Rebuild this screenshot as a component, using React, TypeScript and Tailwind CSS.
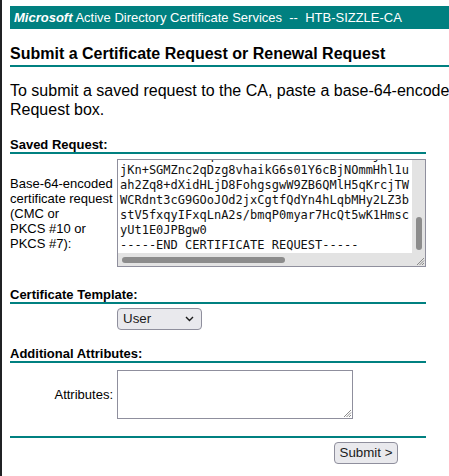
import React from 'react'

// Lines of the pasted request, as seen in the scrolled text box
const requestLines = [
  "X5rNc0aMTb8HqUt3kWn9sE2LvhR7odAx1eFjZmK4",
  "jKn+SGMZnc2qDzg8vhaikG6s01Y6cBjNOmmHhl1u",
  "ah2Zq8+dXidHLjD8FohgsgwW9ZB6QMlH5qKrcjTW",
  "WCRdnt3cG9GOoJOd2jxCgtfQdYn4hLqbMHy2LZ3b",
  "stV5fxqyIFxqLnA2s/bmqP0myar7HcQt5wK1Hmsc",
  "yUt1E0JPBgw0",
  "-----END CERTIFICATE REQUEST-----",
]

const SectionTitle = ({ children }: { children: React.ReactNode }) => (
  <div className="border-b-2 border-[#008080] text-[13px] font-bold leading-[15px]">{children}</div>
)

const Grip = () => (
  <svg width="11" height="11" viewBox="0 0 11 11" className="text-[#8a8a8a]">
    <path d="M10 3 L3 10 M10 5.5 L5.5 10 M10 8 L8 10" stroke="currentColor" strokeWidth="1" fill="none" />
  </svg>
)

const App = () => {
  return (
    <div className="flex min-h-screen bg-white font-['Liberation_Sans',Arial,sans-serif] text-black">
      <div className="w-[2px] shrink-0 bg-[#202124]" />
      <div className="flex-1 overflow-hidden pl-[8px] pt-[6px]">
        {/* banner */}
        <div className="flex h-[23px] w-[700px] items-center whitespace-pre bg-[#008080] pl-[4px] text-[13px] text-white">
          <span className="font-bold italic">Microsoft</span>
          <span> Active Directory Certificate Services{"\u00a0 --\u00a0 "}HTB-SIZZLE-CA</span>
        </div>

        <h2 className="mt-[16px] w-[700px] border-b-2 border-[#008080] pb-[2px] text-[16px] font-bold leading-[18px]">
          Submit a Certificate Request or Renewal Request
        </h2>

        <p className="mt-[14px] whitespace-nowrap text-[16px] leading-[19px]">
          To submit a saved request to the CA, paste a base-64-encoded CMC or PKCS #10 certificate request or PKCS #7 renewal request generated by an external source (such as a Web server) in the Saved
          <br />
          Request box.
        </p>

        <div className="w-[416px]">
          <div className="mt-[18px]">
            <SectionTitle>Saved Request:</SectionTitle>
          </div>

          <div className="mt-[5px] flex items-center gap-[4px]">
            <div className="w-[103px] text-[13px] leading-[15px]">
              Base-64-encoded certificate request (CMC or
              <br />
              PKCS #10 or
              <br />
              PKCS #7):
            </div>
            <div className="flex h-[108px] w-[309px] flex-col border border-[#8f8f9d] bg-white">
              <div className="flex min-h-0 flex-1">
                <div className="flex-1 overflow-hidden whitespace-pre pl-[2px] font-['DejaVu_Sans_Mono',monospace] text-[12px] leading-[15px] text-[#111]">
                  {requestLines.map((line, i) => (
                    <div key={i} className={i === 0 ? '-mt-[12px]' : ''}>{line}</div>
                  ))}
                </div>
                <div className="w-[13px] bg-[#e3e3e3] pt-[57px]">
                  <div className="mx-auto h-[33px] w-[6px] rounded-full bg-[#8c8c8c]" />
                </div>
              </div>
              <div className="flex h-[13px]">
                <div className="flex flex-1 items-center bg-[#e3e3e3] pl-[4px]">
                  <div className="h-[6px] w-[163px] rounded-full bg-[#8c8c8c]" />
                </div>
                <div className="flex w-[13px] items-end justify-end bg-[#e3e3e3]">
                  <Grip />
                </div>
              </div>
            </div>
          </div>

          <div className="mt-[20px]">
            <SectionTitle>Certificate Template:</SectionTitle>
          </div>
          <div className="mt-[4px] pl-[107px]">
            <div className="flex h-[22px] w-[85px] items-center justify-between rounded-[4px] border border-[#8f8f9d] bg-[#e9e9ed] pl-[5px] pr-[7px] text-[13.33px] text-[#1b1b1b]">
              <span>User</span>
              <svg width="9" height="6" viewBox="0 0 9 6">
                <path d="M1 1 L4.5 4.5 L8 1" stroke="#1b1b1b" strokeWidth="1.4" fill="none" />
              </svg>
            </div>
          </div>

          <div className="mt-[16px]">
            <SectionTitle>Additional Attributes:</SectionTitle>
          </div>
          <div className="mt-[7px] flex items-center gap-[4px]">
            <div className="w-[103px] text-right text-[13px] leading-[15px]">Attributes:</div>
            <div className="flex h-[49px] w-[236px] items-end justify-end border border-[#8f8f9d] bg-white">
              <Grip />
            </div>
          </div>

          <div className="mt-[17px] border-b-2 border-[#008080]" />
          <div className="mt-[4px] flex pl-[324px]">
            <button className="h-[22px] w-[64px] rounded-[4px] border border-[#8f8f9d] bg-[#e9e9ed] text-[13.33px] text-[#1b1b1b]">
              Submit &gt;
            </button>
          </div>
        </div>
      </div>
    </div>
  )
}

export default App
